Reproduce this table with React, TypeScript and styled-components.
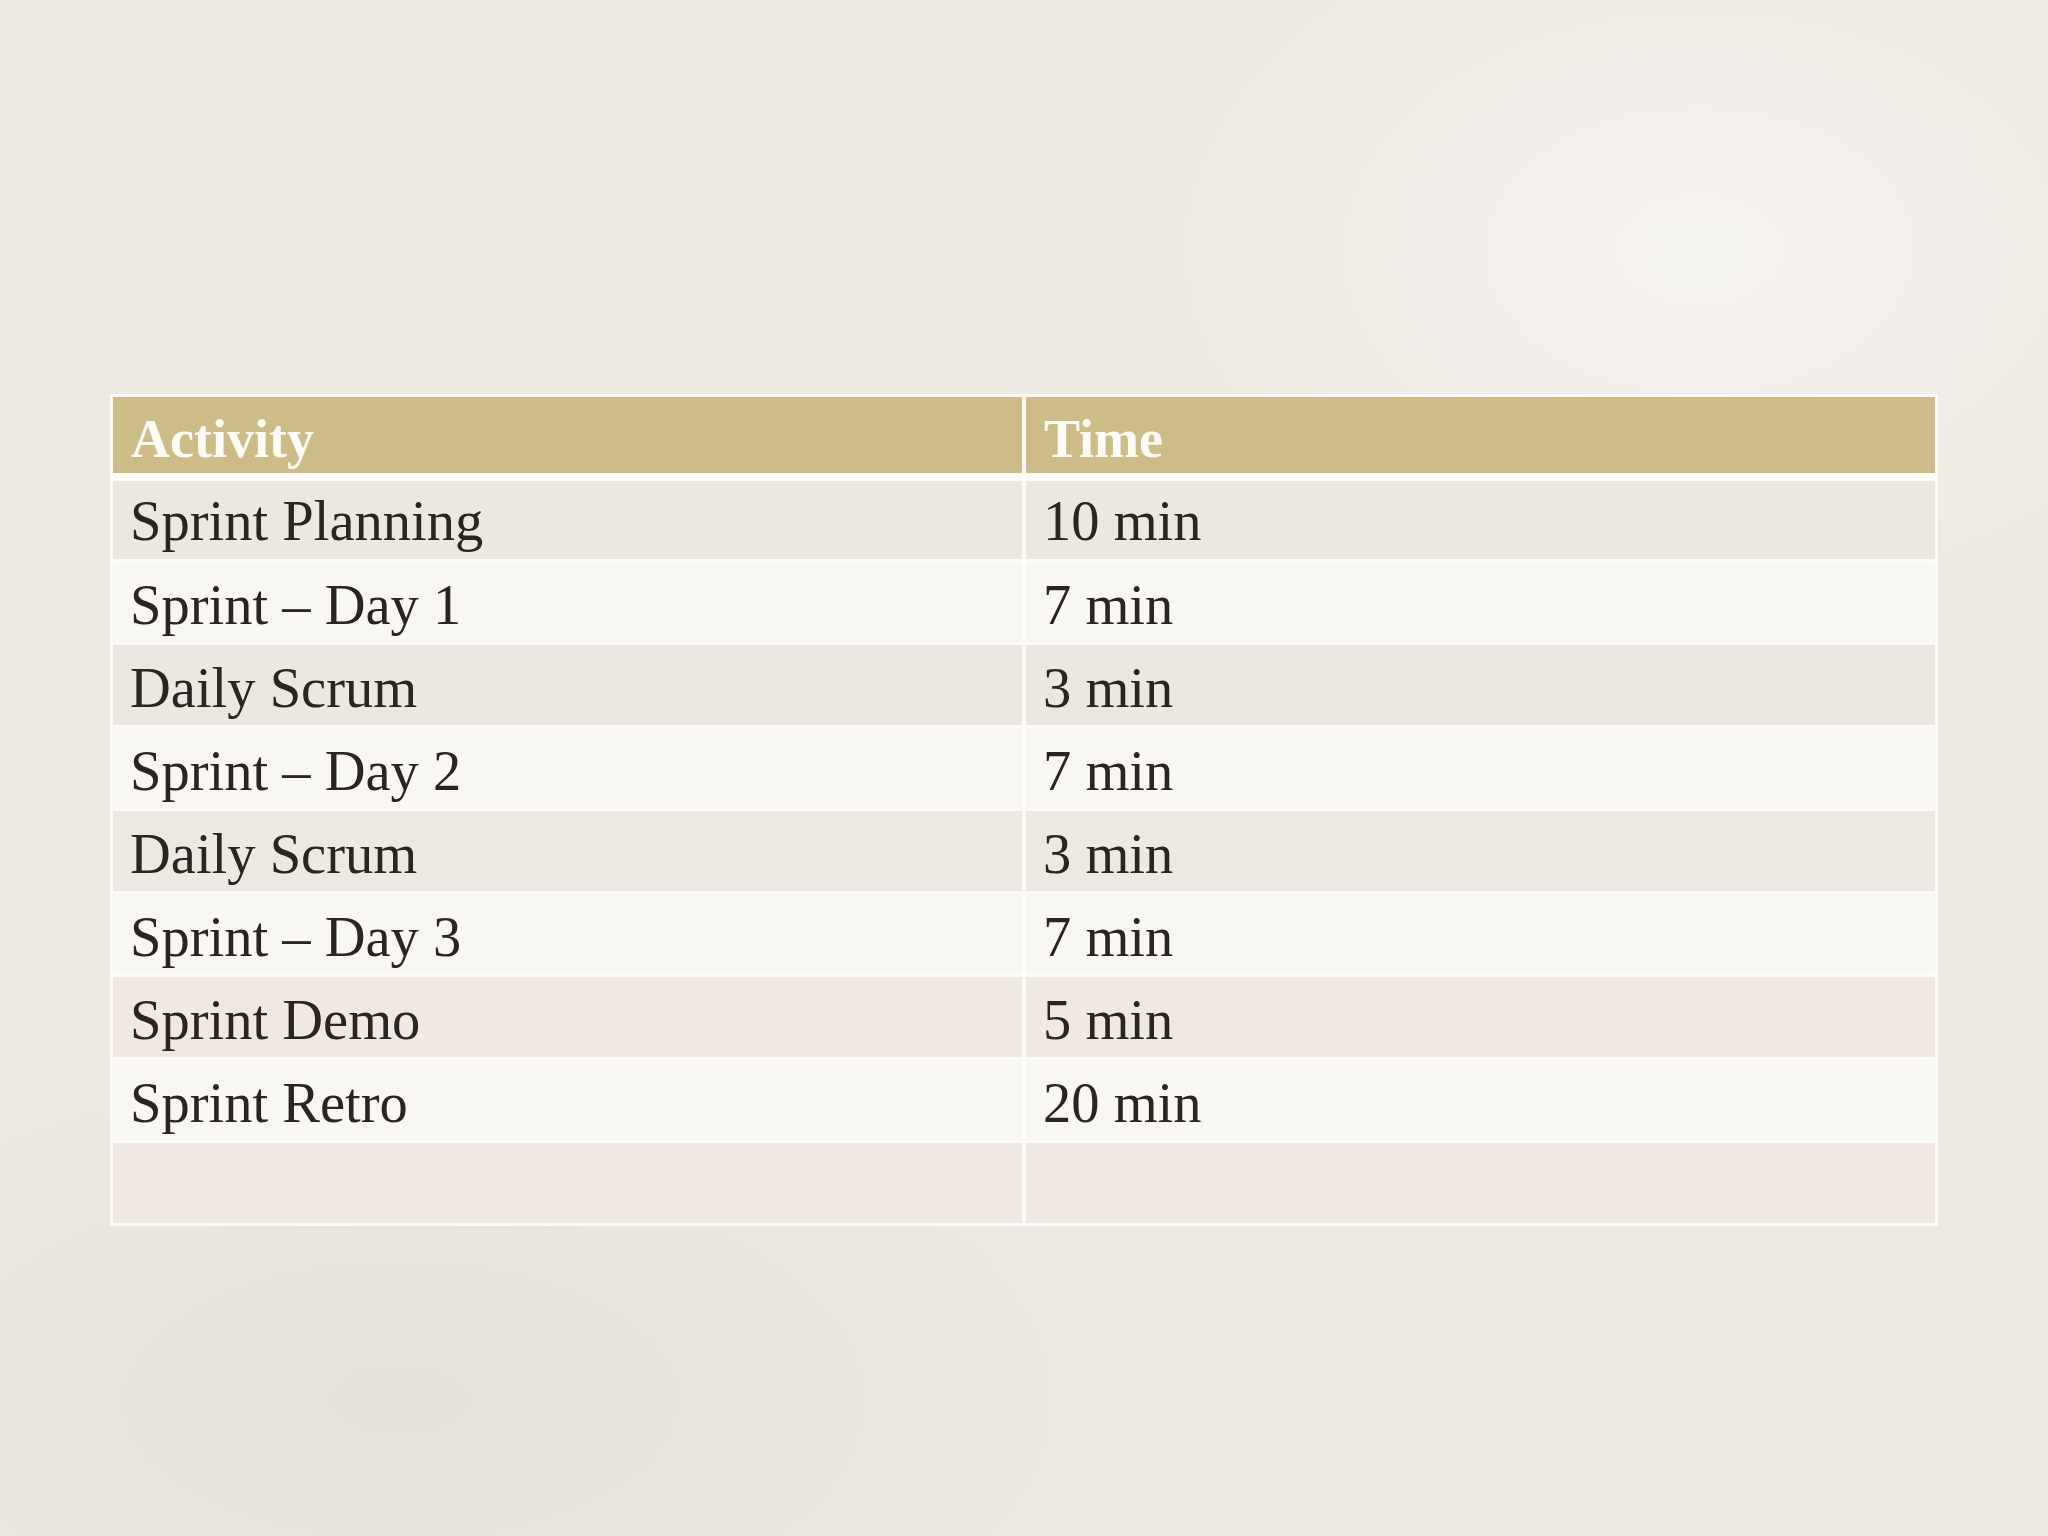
import React from "react"
import styled, { createGlobalStyle } from "styled-components"

type Row = { activity: string; time: string; tone: string }

const rows: Row[] = [
  { activity: "Sprint Planning", time: "10 min", tone: "#ebe8e0" },
  { activity: "Sprint – Day 1", time: "7 min", tone: "#f9f7f2" },
  { activity: "Daily Scrum", time: "3 min", tone: "#ebe8e1" },
  { activity: "Sprint – Day 2", time: "7 min", tone: "#f9f7f2" },
  { activity: "Daily Scrum", time: "3 min", tone: "#eee8e2" },
  { activity: "Sprint – Day 3", time: "7 min", tone: "#f9f7f2" },
  { activity: "Sprint Demo", time: "5 min", tone: "#efe8e3" },
  { activity: "Sprint Retro", time: "20 min", tone: "#f9f7f2" },
  { activity: "", time: "", tone: "#efe8e3" },
]

const GlobalStyle = createGlobalStyle`
  html, body {
    margin: 0;
    padding: 0;
  }
  body {
    background: #ebe7e1;
    font-family: "Liberation Serif", "DejaVu Serif", serif;
  }
`

const Slide = styled.main`
  width: 2048px;
  height: 1536px;
  box-sizing: border-box;
  padding: 394px 110px 0 110px;
  background:
    radial-gradient(ellipse 900px 600px at 1700px 250px, rgba(246, 244, 239, 0.9), rgba(246, 244, 239, 0) 70%),
    radial-gradient(ellipse 1000px 500px at 400px 1400px, rgba(226, 222, 214, 0.7), rgba(226, 222, 214, 0) 70%),
    radial-gradient(ellipse 700px 500px at 300px 150px, rgba(238, 235, 229, 0.8), rgba(238, 235, 229, 0) 70%),
    #ece8e2;
`

const Table = styled.div`
  width: 1828px;
  box-sizing: border-box;
  padding: 3px;
  background: #fcfbf7;
  display: grid;
  grid-template-columns: 909px 909px;
  grid-template-rows: 76px 83px repeat(8, 80px);
  column-gap: 4px;
  row-gap: 3px;
`

const HeadCell = styled.div`
  background: #cdbc88;
  color: #fdfcf7;
  font-weight: bold;
  font-size: 54px;
  line-height: 1;
  padding: 15px 0 0 18px;
`

const Cell = styled.div<{ $tone: string; $first?: boolean }>`
  background: ${p => p.$tone};
  color: #2a2520;
  font-size: 56.5px;
  line-height: 1;
  padding: ${p => (p.$first ? "12px" : "15px")} 0 0 17px;
  white-space: nowrap;
  ${p => p.$first && "margin-top: 5px;"}
`

export default function App() {
  return (
    <>
      <GlobalStyle />
      <Slide>
        <Table>
          <HeadCell>Activity</HeadCell>
          <HeadCell>Time</HeadCell>
          {rows.map((r, i) => (
            <React.Fragment key={i}>
              <Cell $tone={r.tone} $first={i === 0}>
                {r.activity}
              </Cell>
              <Cell $tone={r.tone} $first={i === 0}>
                {r.time}
              </Cell>
            </React.Fragment>
          ))}
        </Table>
      </Slide>
    </>
  )
}
